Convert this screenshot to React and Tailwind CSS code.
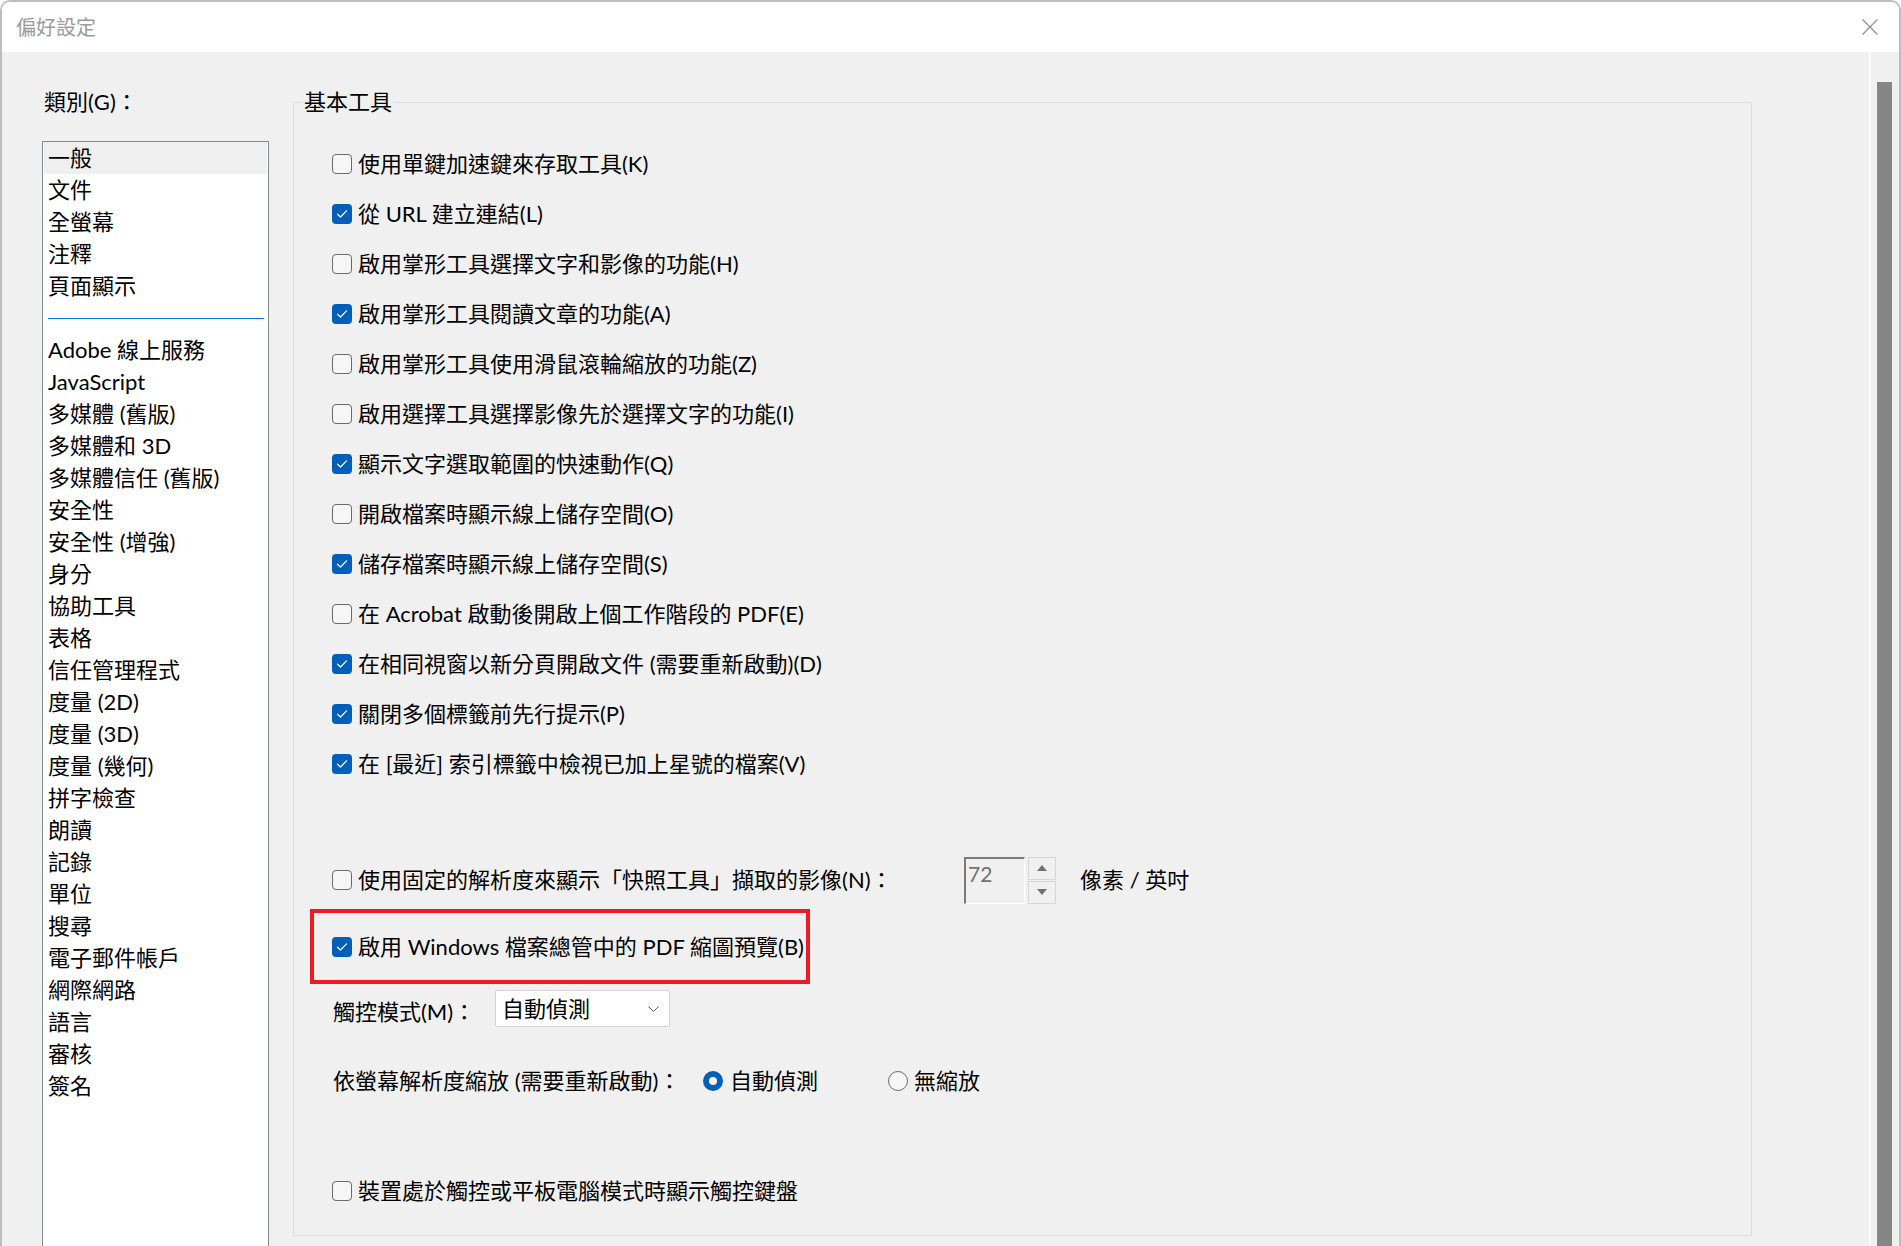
import { useState } from "react";

const FONT = "font-['Lato','Noto_Sans_CJK_TC',sans-serif]";

const categoriesTop = ["一般", "文件", "全螢幕", "注釋", "頁面顯示"];

const categoriesBottom = [
  "Adobe 線上服務",
  "JavaScript",
  "多媒體 (舊版)",
  "多媒體和 3D",
  "多媒體信任 (舊版)",
  "安全性",
  "安全性 (增強)",
  "身分",
  "協助工具",
  "表格",
  "信任管理程式",
  "度量 (2D)",
  "度量 (3D)",
  "度量 (幾何)",
  "拼字檢查",
  "朗讀",
  "記錄",
  "單位",
  "搜尋",
  "電子郵件帳戶",
  "網際網路",
  "語言",
  "審核",
  "簽名",
];

const basicTools = [
  { label: "使用單鍵加速鍵來存取工具(K)", checked: false },
  { label: "從 URL 建立連結(L)", checked: true },
  { label: "啟用掌形工具選擇文字和影像的功能(H)", checked: false },
  { label: "啟用掌形工具閱讀文章的功能(A)", checked: true },
  { label: "啟用掌形工具使用滑鼠滾輪縮放的功能(Z)", checked: false },
  { label: "啟用選擇工具選擇影像先於選擇文字的功能(I)", checked: false },
  { label: "顯示文字選取範圍的快速動作(Q)", checked: true },
  { label: "開啟檔案時顯示線上儲存空間(O)", checked: false },
  { label: "儲存檔案時顯示線上儲存空間(S)", checked: true },
  { label: "在 Acrobat 啟動後開啟上個工作階段的 PDF(E)", checked: false },
  { label: "在相同視窗以新分頁開啟文件 (需要重新啟動)(D)", checked: true },
  { label: "關閉多個標籤前先行提示(P)", checked: true },
  { label: "在 [最近] 索引標籤中檢視已加上星號的檔案(V)", checked: true },
];

const CheckBox = ({ checked, onToggle }) => {
  if (checked) {
    return (
      <span
        onClick={onToggle}
        className="flex h-[20px] w-[20px] shrink-0 items-center justify-center rounded-[4px] bg-[#005fb8]"
      >
        <svg width="12" height="10" viewBox="0 0 12 10" fill="none">
          <path
            d="M1.5 5.2 L4.5 8 L10.5 1.8"
            stroke="#ffffff"
            strokeWidth="1.2"
            strokeLinecap="round"
            strokeLinejoin="round"
          />
        </svg>
      </span>
    );
  }
  return (
    <span
      onClick={onToggle}
      className="h-[20px] w-[20px] shrink-0 rounded-[4px] border border-[#6a6a6a] bg-[#f6f6f6]"
    />
  );
};

const CheckRow = ({ label, defaultChecked }) => {
  const [checked, setChecked] = useState(defaultChecked);
  return (
    <div className="flex h-[50px] items-center gap-[6px]">
      <CheckBox checked={checked} onToggle={() => setChecked(!checked)} />
      <span className="leading-[32px]">{label}</span>
    </div>
  );
};

const Radio = ({ checked }) =>
  checked ? (
    <span className="flex h-[20px] w-[20px] shrink-0 items-center justify-center rounded-full bg-[#005fb8]">
      <span className="h-[8px] w-[8px] rounded-full bg-white" />
    </span>
  ) : (
    <span className="h-[20px] w-[20px] shrink-0 rounded-full border border-[#6a6a6a] bg-[#f6f6f6]" />
  );

const CategoryList = () => (
  <div className="w-[227px] shrink-0">
    <div className="h-[32px] pl-[2px] leading-[32px]">{`類別(G)：`}</div>
    <div className="mt-[23px] h-[1120px] border border-[#82878f] bg-white">
      {categoriesTop.map((name, i) => (
        <div
          key={name}
          className={`mx-px h-[32px] px-[4px] leading-[32px] ${
            i === 0 ? "bg-[#efefef]" : ""
          }`}
        >
          {name}
        </div>
      ))}
      <div className="flex h-[32px] items-center pl-[5px] pr-[4px]">
        <div className="h-px w-full bg-[#0078d7]" />
      </div>
      {categoriesBottom.map((name) => (
        <div key={name} className="mx-px h-[32px] px-[4px] leading-[32px]">
          {name}
        </div>
      ))}
    </div>
  </div>
);

const SnapshotRow = () => (
  <div className="flex h-[50px] items-center">
    <div className="flex w-[632px] items-center gap-[6px]">
      <CheckBox checked={false} />
      <span className="leading-[32px]">{`使用固定的解析度來顯示「快照工具」擷取的影像(N)：`}</span>
    </div>
    <div className="h-[47px] w-[61px] border-b border-l-2 border-r border-t-2 border-b-white border-l-[#7a7a7a] border-r-white border-t-[#7a7a7a] bg-[#f0f0f0] pl-[2px] pt-px text-[21px] leading-[28px] text-[#707070]">
      72
    </div>
    <div className="ml-[3px] flex h-[47px] w-[28px] flex-col gap-px">
      <div className="flex h-[23px] items-center justify-center border border-[#d6d6d6]">
        <svg width="10" height="6" viewBox="0 0 10 6">
          <path d="M0 6 L5 0 L10 6 Z" fill="#707070" />
        </svg>
      </div>
      <div className="flex h-[23px] items-center justify-center border border-[#d6d6d6]">
        <svg width="10" height="6" viewBox="0 0 10 6">
          <path d="M0 0 L10 0 L5 6 Z" fill="#707070" />
        </svg>
      </div>
    </div>
    <span className="ml-[24px] leading-[32px]">{`像素 / 英吋`}</span>
  </div>
);

const BasicTools = () => (
  <fieldset className="ml-[24px] w-[1459px] shrink-0 border border-[#dcdcdc] pb-[24px]">
    <legend className="ml-[9px] px-[1px] leading-[32px]">{`基本工具`}</legend>
    <div className="pl-[38px] pt-[21px]">
      {basicTools.map((item) => (
        <CheckRow
          key={item.label}
          label={item.label}
          defaultChecked={item.checked}
        />
      ))}

      <div className="mt-[66px]">
        <SnapshotRow />
      </div>

      <div className="-ml-[22px] mt-[4px] flex h-[75px] w-[500px] items-center border-4 border-[#ed1c24] pl-[18px]">
        <div className="flex items-center gap-[6px]">
          <CheckBox checked={true} />
          <span className="leading-[32px]">{`啟用 Windows 檔案總管中的 PDF 縮圖預覽(B)`}</span>
        </div>
      </div>

      <div className="mt-[6px] flex h-[37px] items-center">
        <span className="mt-[6px] w-[163px] pl-px leading-[32px]">{`觸控模式(M)：`}</span>
        <div className="flex h-[37px] w-[175px] items-center justify-between rounded-[2px] border border-[#d4d4d4] bg-white pl-[6px] pr-[10px]">
          <span className="leading-[32px]">{`自動偵測`}</span>
          <svg width="11" height="6" viewBox="0 0 11 6" fill="none">
            <path d="M0.5 0.5 L5.5 5.5 L10.5 0.5" stroke="#5a5a5a" strokeWidth="1" />
          </svg>
        </div>
      </div>

      <div className="mt-[34px] flex h-[40px] items-center">
        <span className="w-[371px] pl-px leading-[32px]">{`依螢幕解析度縮放 (需要重新啟動)：`}</span>
        <div className="flex w-[185px] items-center gap-[7px]">
          <Radio checked={true} />
          <span className="leading-[32px]">{`自動偵測`}</span>
        </div>
        <div className="flex items-center gap-[6px]">
          <Radio checked={false} />
          <span className="leading-[32px]">{`無縮放`}</span>
        </div>
      </div>

      <div className="mt-[70px] flex h-[40px] items-center gap-[6px]">
        <CheckBox checked={false} />
        <span className="leading-[32px]">{`裝置處於觸控或平板電腦模式時顯示觸控鍵盤`}</span>
      </div>
    </div>
  </fieldset>
);

const App = () => {
  return (
    <div
      className={`${FONT} h-[1246px] w-[1901px] overflow-hidden rounded-t-[10px] border-x-2 border-t-2 border-[#bdbdbd] bg-[#f0f0f0] text-[22px] text-black`}
    >
      <div className="flex h-[50px] items-center justify-between bg-white pl-[14px] pr-[21px]">
        <span className="text-[20px] leading-[30px] text-[#9a9a9a]">{`偏好設定`}</span>
        <svg width="16" height="16" viewBox="0 0 16 16" fill="none">
          <path d="M0.5 0.5 L15.5 15.5 M15.5 0.5 L0.5 15.5" stroke="#8a8a8a" strokeWidth="1.1" />
        </svg>
      </div>
      <div className="flex h-[1194px]">
        <div className="flex flex-1 items-start pl-[40px] pt-[34px]">
          <CategoryList />
          <BasicTools />
        </div>
        <div className="w-[30px] shrink-0 border-l-2 border-[#fbfbfb] pl-[6px] pt-[30px]">
          <div className="h-full w-[15px] bg-[#868686]" />
        </div>
      </div>
    </div>
  );
};

export default App;
